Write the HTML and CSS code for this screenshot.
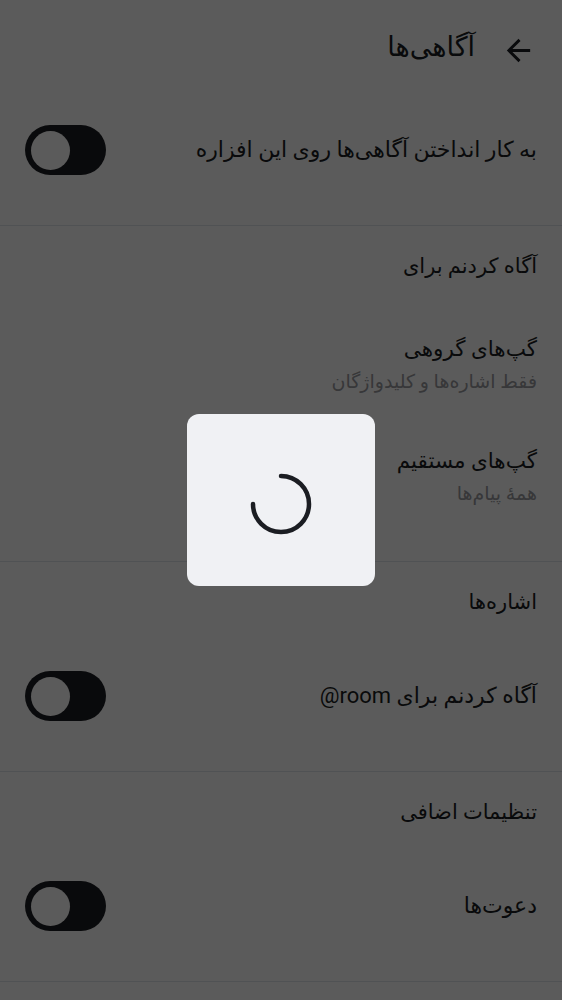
FILE: index.html
```html
<!DOCTYPE html>
<html lang="fa" dir="rtl">
<head>
<meta charset="utf-8">
<title>آگاهی‌ها</title>
<link rel="stylesheet" href="styles.css">
</head>
<body>
<div class="page">
  <header class="header">
    <span class="back">
      <svg viewBox="0 0 24 24" width="35" height="35"><path d="M20 11H7.83l5.59-5.59L12 4l-8 8 8 8 1.41-1.41L7.83 13H20v-2z" fill="#1b1d22"/></svg>
    </span>
    <h1 class="title">آگاهی‌ها</h1>
  </header>

  <section class="section">
    <div class="row">
      <span class="row-text">به کار انداختن آگاهی‌ها روی این افزاره</span>
      <span class="toggle"><span class="knob"></span></span>
    </div>
  </section>

  <section class="section">
    <div class="sec-title">آگاه کردنم برای</div>
    <div class="item">
      <div class="item-title">گپ‌های گروهی</div>
      <div class="item-sub">فقط اشاره‌ها و کلیدواژگان</div>
    </div>
    <div class="item">
      <div class="item-title">گپ‌های مستقیم</div>
      <div class="item-sub">همهٔ پیام‌ها</div>
    </div>
    <div class="sec-end"></div>
  </section>

  <section class="section">
    <div class="sec-title">اشاره‌ها</div>
    <div class="row">
      <span class="row-text">آگاه کردنم برای <bdi>@room</bdi></span>
      <span class="toggle"><span class="knob"></span></span>
    </div>
  </section>

  <section class="section">
    <div class="sec-title">تنظیمات اضافی</div>
    <div class="row">
      <span class="row-text">دعوت‌ها</span>
      <span class="toggle"><span class="knob"></span></span>
    </div>
  </section>
</div>

<div class="scrim"></div>
<div class="dialog">
  <svg class="spinner" viewBox="0 0 64 64" width="64" height="64">
    <path d="M32 4 A28 28 0 1 1 4 32" fill="none" stroke="#1b1d22" stroke-width="4.5" stroke-linecap="round"/>
  </svg>
</div>
</body>
</html>
```

FILE: styles.css
```css
html, body {
  margin: 0;
  padding: 0;
  background: #ffffff;
}
body {
  font-family: Roboto, "DejaVu Sans", sans-serif;
  color: #1b1d22;
  width: 562px;
  height: 1000px;
  overflow: hidden;
}
.page {
  display: flex;
  flex-direction: column;
}
.header {
  height: 100px;
  display: flex;
  align-items: center;
  gap: 26px;
  padding: 0 26px 0 0;
  box-sizing: border-box;
}
.back {
  display: flex;
  width: 35px;
  height: 35px;
}
.title {
  margin: 0;
  font-size: 27px;
  font-weight: normal;
  line-height: 34px;
  position: relative;
  top: -3px;
}
.section {
  border-bottom: 1px solid #e1e6ec;
}
.row {
  display: flex;
  align-items: center;
  justify-content: space-between;
  padding: 25px 25px 50px 25px;
}
.row-text {
  font-size: 22px;
  line-height: 28px;
}
.toggle {
  width: 81px;
  height: 50px;
  border-radius: 25px;
  background: #1b1d22;
  display: flex;
  align-items: center;
  justify-content: flex-end;
  padding: 0 6px;
  box-sizing: border-box;
}
.knob {
  width: 39px;
  height: 39px;
  border-radius: 50%;
  background: #ffffff;
}
.sec-title {
  font-size: 21px;
  line-height: 28px;
  padding: 26px 25px 30px 25px;
}
.item {
  padding: 23px 25px;
  display: flex;
  flex-direction: column;
}
.item-title {
  font-size: 21.5px;
  line-height: 32px;
}
.item-sub {
  font-size: 19px;
  line-height: 34px;
  color: #9a9ba0;
}
.sec-end {
  height: 27px;
}
.scrim {
  position: fixed;
  inset: 0;
  background: rgba(0, 0, 0, 0.643);
}
.dialog {
  position: fixed;
  left: 187px;
  top: 414px;
  width: 188px;
  height: 172px;
  border-radius: 12px;
  background: #f0f1f4;
  display: flex;
  align-items: center;
  justify-content: center;
  padding-top: 8px;
  box-sizing: border-box;
}
```
